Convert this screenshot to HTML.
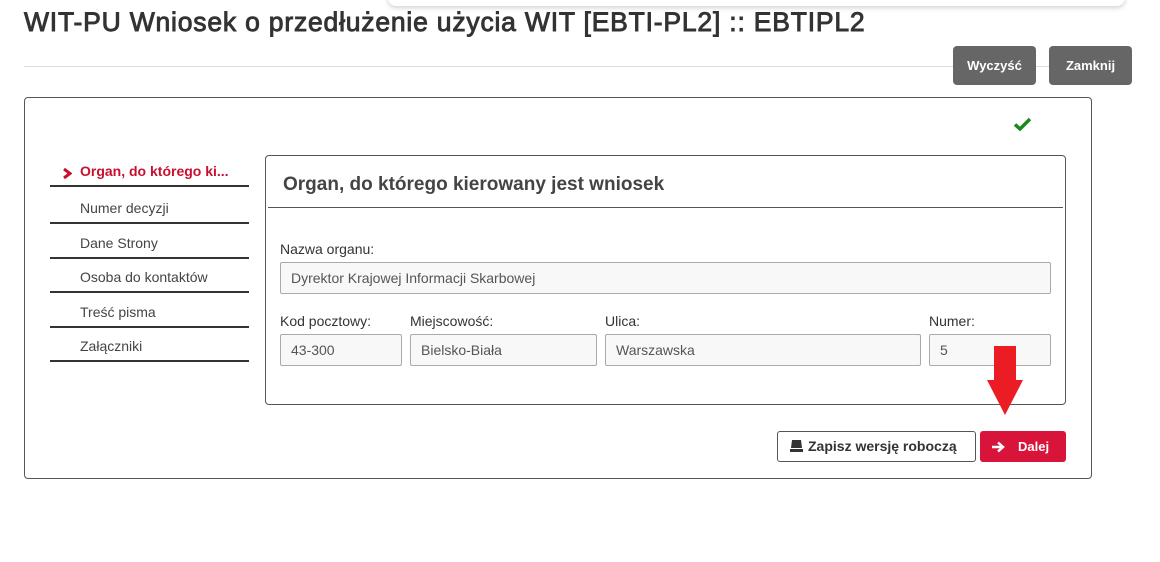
<!DOCTYPE html>
<html><head><meta charset="utf-8"><style>
*{box-sizing:border-box;margin:0;padding:0}
body{width:1160px;height:562px;background:#fff;position:relative;overflow:hidden;font-family:"Liberation Sans",Arial,sans-serif;color:#333}
.a{position:absolute}
.topbar{left:388px;top:-10px;width:737px;height:16px;background:#fff;border-radius:8px;box-shadow:0 2px 5px rgba(0,0,0,.18)}
h1{position:absolute;left:24px;top:7px;font-size:26.5px;font-weight:normal;-webkit-text-stroke:.9px #333;color:#333;white-space:nowrap;letter-spacing:.8px}
.hr{left:24px;top:66px;width:1108px;height:1px;background:#ddd}
.gbtn{top:46px;height:39px;background:#666;color:#fff;border-radius:4px;font-size:13px;font-weight:bold;text-align:center;line-height:39px}
.box{left:24px;top:97px;width:1068px;height:382px;border:1px solid #555;border-radius:4px}
.nav{left:50px;width:199px;height:35px;border-bottom:2px solid #333;font-size:14px;color:#444;padding-left:30px;line-height:38px}
.panel{left:265px;top:155px;width:801px;height:250px;border:1px solid #555;border-radius:4px}
.lbl{font-size:14px;color:#333}
.inp{height:32px;background:#f8f8f8;border:1px solid #aaa;border-radius:2px;font-size:14px;color:#555;padding-left:10px;line-height:30px}
</style></head><body>
<div class="a topbar"></div>
<h1>WIT-PU Wniosek o przedłużenie użycia WIT [EBTI-PL2] :: EBTIPL2</h1>
<div class="a hr"></div>
<div class="a gbtn" style="left:953px;width:83px">Wyczyść</div>
<div class="a gbtn" style="left:1049px;width:83px">Zamknij</div>
<div class="a box"></div>
<svg class="a" style="left:1013px;top:117px" width="19" height="15" viewBox="0 0 19 15"><path d="M2 7.5 L7 12 L17 2" stroke="#1a8a1a" stroke-width="3.5" fill="none"/></svg>
<div class="a nav" style="top:152px;color:#c8102e;font-weight:bold">Organ, do którego ki...</div>
<svg class="a" style="left:63px;top:168px" width="9" height="11" viewBox="0 0 9 11"><path d="M1 1 L7 5.5 L1 10" stroke="#c8102e" stroke-width="3" fill="none"/></svg>
<div class="a nav" style="top:189px">Numer decyzji</div>
<div class="a nav" style="top:224px">Dane Strony</div>
<div class="a nav" style="top:258px">Osoba do kontaktów</div>
<div class="a nav" style="top:293px">Treść pisma</div>
<div class="a nav" style="top:327px">Załączniki</div>
<div class="a panel"></div>
<div class="a" style="left:283px;top:174px;font-size:19px;font-weight:bold;color:#444">Organ, do którego kierowany jest wniosek</div>
<div class="a" style="left:268px;top:207px;width:795px;height:1px;background:#555"></div>
<div class="a lbl" style="left:280px;top:241px">Nazwa organu:</div>
<div class="a inp" style="left:280px;top:262px;width:771px">Dyrektor Krajowej Informacji Skarbowej</div>
<div class="a lbl" style="left:280px;top:313px">Kod pocztowy:</div>
<div class="a lbl" style="left:410px;top:313px">Miejscowość:</div>
<div class="a lbl" style="left:605px;top:313px">Ulica:</div>
<div class="a lbl" style="left:929px;top:313px">Numer:</div>
<div class="a inp" style="left:280px;top:334px;width:122px">43-300</div>
<div class="a inp" style="left:410px;top:334px;width:187px">Bielsko-Biała</div>
<div class="a inp" style="left:605px;top:334px;width:316px">Warszawska</div>
<div class="a inp" style="left:929px;top:334px;width:122px">5</div>
<svg class="a" style="left:985px;top:346px" width="40" height="70" viewBox="0 0 40 70"><path d="M9 0 H31 V34 H38 L20 69 L2 34 H9 Z" fill="#ec1c24"/></svg>
<div class="a" style="left:777px;top:431px;width:199px;height:31px;border:1px solid #555;border-radius:3px;font-size:14px;font-weight:bold;line-height:29px;padding-left:30px;color:#333">Zapisz wersję roboczą</div>
<svg class="a" style="left:790px;top:439px" width="13" height="13" viewBox="0 0 13 13"><path d="M2 1 H11 L12 9 H1 Z M0 10 H13 V13 H0 Z" fill="#333"/></svg>
<div class="a" style="left:980px;top:431px;width:86px;height:31px;background:#d8143a;border-radius:3px;color:#fff;font-size:13px;font-weight:bold;line-height:31px;padding-left:38px">Dalej</div>
<svg class="a" style="left:992px;top:441px" width="14" height="12" viewBox="0 0 14 12"><path d="M0 6 H10 M6 1.5 L11 6 L6 10.5" stroke="#fff" stroke-width="2.5" fill="none"/></svg>
</body></html>
